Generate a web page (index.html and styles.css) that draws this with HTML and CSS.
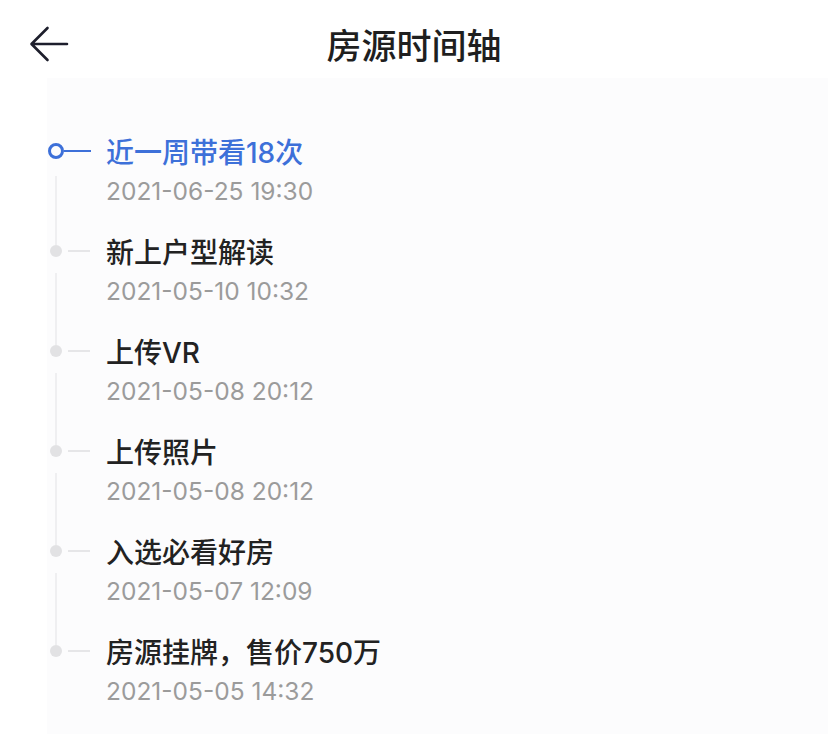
FILE: index.html
```html
<!DOCTYPE html>
<html lang="zh-CN">
<head>
<meta charset="utf-8">
<title>房源时间轴</title>
<link rel="stylesheet" href="styles.css">
</head>
<body>
<div class="page">
  <header class="topbar">
    <div class="back">
      <svg width="40" height="36" viewBox="0 0 40 36" aria-hidden="true">
        <path d="M38 18 H3 M18.5 2 L2.5 18 L18.5 34" fill="none" stroke="#1d1e2c" stroke-width="2.6" stroke-linecap="round" stroke-linejoin="round"/>
      </svg>
    </div>
    <h1 class="title">房源时间轴</h1>
    <div class="spacer"></div>
  </header>
  <main class="panel">
    <ul class="timeline">
      <li class="item active">
        <div class="marker">
          <div class="dot-row"><span class="dot"></span><span class="dash"></span></div>
          <span class="vline"></span>
        </div>
        <div class="content">
          <div class="event">近一周带看18次</div>
          <div class="time">2021-06-25 19:30</div>
        </div>
      </li>
      <li class="item">
        <div class="marker">
          <div class="dot-row"><span class="dot"></span><span class="dash"></span></div>
          <span class="vline"></span>
        </div>
        <div class="content">
          <div class="event">新上户型解读</div>
          <div class="time">2021-05-10 10:32</div>
        </div>
      </li>
      <li class="item">
        <div class="marker">
          <div class="dot-row"><span class="dot"></span><span class="dash"></span></div>
          <span class="vline"></span>
        </div>
        <div class="content">
          <div class="event">上传VR</div>
          <div class="time">2021-05-08 20:12</div>
        </div>
      </li>
      <li class="item">
        <div class="marker">
          <div class="dot-row"><span class="dot"></span><span class="dash"></span></div>
          <span class="vline"></span>
        </div>
        <div class="content">
          <div class="event">上传照片</div>
          <div class="time">2021-05-08 20:12</div>
        </div>
      </li>
      <li class="item">
        <div class="marker">
          <div class="dot-row"><span class="dot"></span><span class="dash"></span></div>
          <span class="vline"></span>
        </div>
        <div class="content">
          <div class="event">入选必看好房</div>
          <div class="time">2021-05-07 12:09</div>
        </div>
      </li>
      <li class="item last">
        <div class="marker">
          <div class="dot-row"><span class="dot"></span><span class="dash"></span></div>
          <span class="vline"></span>
        </div>
        <div class="content">
          <div class="event">房源挂牌，售价750万</div>
          <div class="time">2021-05-05 14:32</div>
        </div>
      </li>
    </ul>
  </main>
</div>
</body>
</html>
```

FILE: styles.css
```css
* { box-sizing: border-box; }
html, body {
  margin: 0;
  padding: 0;
  background: #ffffff;
}
body {
  width: 828px;
  height: 734px;
  overflow: hidden;
  font-family: Inter, "Noto Sans CJK SC", sans-serif;
  color: #222222;
}
.page {
  display: flex;
  flex-direction: column;
  height: 734px;
}
.topbar {
  display: grid;
  grid-template-columns: 120px 1fr 120px;
  align-items: center;
  height: 78px;
  flex: none;
  padding-bottom: 0;
}
.back {
  padding-left: 29px;
  padding-top: 10px;
  display: flex;
  align-items: center;
}
.back svg { display: block; }
.title {
  margin: 0;
  padding-top: 10px;
  text-align: center;
  font-family: "Noto Sans CJK SC", sans-serif;
  font-size: 35px;
  font-weight: 500;
  color: #1f1f1f;
  line-height: 44px;
}
.panel {
  flex: 1;
  margin-left: 47px;
  background: #fcfcfd;
}
.timeline {
  list-style: none;
  margin: 0;
  padding: 56px 0 0 0;
}
.item {
  display: flex;
  height: 100px;
}
.marker {
  width: 59px;
  flex: none;
  display: flex;
  flex-direction: column;
}
.dot-row {
  height: 38px;
  display: flex;
  align-items: center;
  padding-left: 3px;
  padding-bottom: 4px;
}
.dot {
  width: 12px;
  height: 12px;
  border-radius: 50%;
  background: #e2e2e4;
  flex: none;
}
.dash {
  width: 22px;
  height: 2px;
  margin-left: 6px;
  background: #e6e6e8;
}
.vline {
  width: 2px;
  margin-left: 8px;
  margin-top: 1px;
  margin-bottom: -11px;
  flex: 1;
  background: #efeff1;
}
.item.last .vline { visibility: hidden; }
.item.active .dot-row { padding-left: 1px; }
.item.active .dot {
  width: 16px;
  height: 16px;
  background: transparent;
  border: 3px solid #3d70d9;
}
.item.active .dash {
  width: 27px;
  margin-left: 0;
  background: #3d70d9;
}
.item.active .vline { margin-top: 4px; }
.content {
  display: flex;
  flex-direction: column;
}
.event {
  font-size: 28px;
  font-weight: 500;
  line-height: 38px;
  color: #222222;
  white-space: nowrap;
}
.item.active .event { color: #3d70d9; }
.time {
  font-size: 24.5px;
  line-height: 38px;
  color: #9b9b9b;
  white-space: nowrap;
}
```
